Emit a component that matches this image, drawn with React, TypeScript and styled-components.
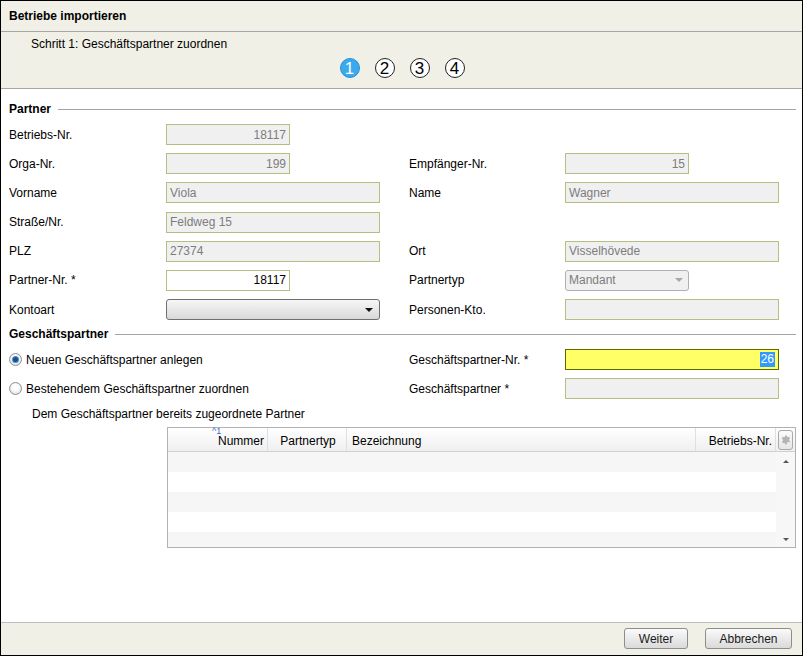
import styled, { createGlobalStyle } from 'styled-components';

const GlobalStyle = createGlobalStyle`
  html, body {
    margin: 0;
    padding: 0;
    background: #ffffff;
  }
  body {
    font-family: 'Liberation Sans', Arial, sans-serif;
    font-size: 12px;
    color: #000;
  }
  * {
    box-sizing: border-box;
  }
`;

type Align = 'left' | 'right' | 'center';

const partnerRows: Array<[string, Field | null, string, Field | null]> = [];

interface Field {
  value: string;
  align?: Align;
  wide?: boolean;
  editable?: boolean;
}

partnerRows.push(
  ['Betriebs-Nr.', { value: '18117', align: 'right' }, '', null],
  ['Orga-Nr.', { value: '199', align: 'right' }, 'Empfänger-Nr.', { value: '15', align: 'right' }],
  ['Vorname', { value: 'Viola', wide: true }, 'Name', { value: 'Wagner', wide: true }],
  ['Straße/Nr.', { value: 'Feldweg 15', wide: true }, '', null],
  ['PLZ', { value: '27374', wide: true }, 'Ort', { value: 'Visselhövede', wide: true }],
  ['Partner-Nr. *', { value: '18117', align: 'right', editable: true }, 'Partnertyp', null],
);

export default function App() {
  return (
    <>
      <GlobalStyle />
      <Window>
        <TitleBar>Betriebe importieren</TitleBar>

        <StepHeader>
          <StepText>Schritt 1: Geschäftspartner zuordnen</StepText>
          <Steps>
            {[1, 2, 3, 4].map((n) => (
              <Step key={n} $active={n === 1}>
                {n}
              </Step>
            ))}
          </Steps>
        </StepHeader>

        <Content>
          <SectionTitle>Partner</SectionTitle>
          <FormGrid>
            {partnerRows.map(([label, field, rLabel, rField], i) => (
              <FormRow key={i}>
                <Label>{label}</Label>
                <div>
                  {field && (
                    <Input $align={field.align} $wide={field.wide} $editable={field.editable}>
                      {field.value}
                    </Input>
                  )}
                </div>
                <Label>{rLabel}</Label>
                <div>
                  {rField && (
                    <Input $align={rField.align} $wide={rField.wide}>
                      {rField.value}
                    </Input>
                  )}
                  {rLabel === 'Partnertyp' && (
                    <LightSelect>
                      Mandant
                      <Caret $color="#a8a8a8" />
                    </LightSelect>
                  )}
                </div>
              </FormRow>
            ))}
            <FormRow>
              <Label>Kontoart</Label>
              <div>
                <ComboBox>
                  <Caret $color="#111" />
                </ComboBox>
              </div>
              <Label>Personen-Kto.</Label>
              <div>
                <Input $wide />
              </div>
            </FormRow>
          </FormGrid>

          <SectionTitle $gap>Geschäftspartner</SectionTitle>
          <FormGrid>
            <FormRow>
              <RadioLabel>
                <Radio $checked />
                Neuen Geschäftspartner anlegen
              </RadioLabel>
              <Label>Geschäftspartner-Nr. *</Label>
              <div>
                <Input $wide $align="right" $highlight>
                  <Selected>26</Selected>
                </Input>
              </div>
            </FormRow>
            <FormRow>
              <RadioLabel>
                <Radio />
                Bestehendem Geschäftspartner zuordnen
              </RadioLabel>
              <Label>Geschäftspartner *</Label>
              <div>
                <Input $wide />
              </div>
            </FormRow>
          </FormGrid>

          <SubCaption>Dem Geschäftspartner bereits zugeordnete Partner</SubCaption>

          <Table>
            <HeaderRow>
              <HeadCell $width={100} $align="right">
                <SortMark>^1</SortMark>
                Nummer
              </HeadCell>
              <HeadCell $width={79} $align="center">Partnertyp</HeadCell>
              <HeadCell $align="left">Bezeichnung</HeadCell>
              <HeadCell $width={80} $align="right">Betriebs-Nr.</HeadCell>
              <GearCell>
                <GearButton>
                  <svg width="10" height="10" viewBox="0 0 24 24" fill="#b4b4b4">
                    <path d="M10 1h4l.6 3.2a8 8 0 0 1 2.1 1.2l3.1-1.1 2 3.5-2.5 2.1a8 8 0 0 1 0 2.4l2.5 2.1-2 3.5-3.1-1.1a8 8 0 0 1-2.1 1.2L14 23h-4l-.6-3.2a8 8 0 0 1-2.1-1.2l-3.1 1.1-2-3.5 2.5-2.1a8 8 0 0 1 0-2.4L2.2 7.6l2-3.5 3.1 1.1a8 8 0 0 1 2.1-1.2z" />
                  </svg>
                </GearButton>
              </GearCell>
            </HeaderRow>
            <TableBody>
              <Rows>
                {[0, 1, 2, 3, 4].map((r) => (
                  <BodyRow key={r} $striped={r % 2 === 0} />
                ))}
              </Rows>
              <ScrollBar>
                <ScrollArrow $up />
                <ScrollArrow />
              </ScrollBar>
            </TableBody>
          </Table>
        </Content>

        <Footer>
          <Button $width={64}>Weiter</Button>
          <Button $width={87}>Abbrechen</Button>
        </Footer>
      </Window>
    </>
  );
}

const Window = styled.div`
  width: 803px;
  height: 656px;
  border: 1px solid #000;
  display: flex;
  flex-direction: column;
  background: #fff;
`;

const TitleBar = styled.div`
  height: 31px;
  display: flex;
  align-items: center;
  padding-left: 8px;
  padding-bottom: 1px;
  font-weight: bold;
  background: #f1f0e6;
  border-bottom: 1px solid #a6a6a6;
`;

const StepHeader = styled.div`
  height: 57px;
  display: flex;
  flex-direction: column;
  padding-top: 5px;
  background: #f1f0e6;
  border-bottom: 1px solid #a6a6a6;
`;

const StepText = styled.div`
  padding-left: 30px;
  line-height: 14px;
`;

const Steps = styled.div`
  display: flex;
  justify-content: center;
  gap: 15px;
  margin-top: 7px;
  padding-left: 1px;
`;

const Step = styled.div<{ $active?: boolean }>`
  width: 20px;
  height: 20px;
  border-radius: 50%;
  display: flex;
  align-items: center;
  justify-content: center;
  font-size: 17px;
  line-height: 1;
  border: 1px solid ${(p) => (p.$active ? '#2c8fd6' : '#222')};
  background: ${(p) => (p.$active ? '#3aa9ee' : '#fff')};
  color: ${(p) => (p.$active ? '#fff' : '#000')};
`;

const Content = styled.div`
  flex: 1;
  padding: 0 6px 0 8px;
  display: flex;
  flex-direction: column;
`;

const SectionTitle = styled.div<{ $gap?: boolean }>`
  display: flex;
  align-items: center;
  gap: 7px;
  margin-top: ${(p) => (p.$gap ? '7px' : '13px')};
  margin-bottom: 8px;
  font-weight: bold;
  line-height: 14px;

  &::after {
    content: '';
    flex: 1;
    height: 1px;
    background: #a4a4a4;
  }
`;

const FormGrid = styled.div`
  display: flex;
  flex-direction: column;
  gap: 8.2px;
`;

const FormRow = styled.div`
  display: grid;
  grid-template-columns: 157px 243px 156px 1fr;
  height: 21px;
  align-items: center;
`;

const Label = styled.div`
  line-height: 14px;
`;

const Input = styled.div<{ $align?: Align; $wide?: boolean; $editable?: boolean; $highlight?: boolean }>`
  width: ${(p) => (p.$wide ? '214px' : '124px')};
  height: 21px;
  padding: 0 3px;
  display: flex;
  align-items: center;
  justify-content: ${(p) => (p.$align === 'right' ? 'flex-end' : 'flex-start')};
  border: 1px solid ${(p) => (p.$highlight ? '#5c6a00' : '#b7be82')};
  background: ${(p) => (p.$highlight ? '#ffff66' : p.$editable ? '#fff' : '#f0f0f0')};
  color: ${(p) => (p.$editable || p.$highlight ? '#000' : '#7d7d7d')};
  font-size: 12px;
`;

const Selected = styled.span`
  background: #3399ff;
  color: #fff;
  line-height: 15px;
  padding: 0 1px;
`;

const LightSelect = styled.div`
  width: 124px;
  height: 21px;
  padding: 0 3px;
  display: flex;
  align-items: center;
  justify-content: space-between;
  border: 1px solid #b0b0b0;
  border-radius: 3px;
  background: #f0f0f0;
  color: #7d7d7d;
`;

const ComboBox = styled.div`
  width: 214px;
  height: 21px;
  padding: 0 4px;
  display: flex;
  align-items: center;
  justify-content: flex-end;
  border: 1px solid #6f6f6f;
  border-radius: 3px;
  background: linear-gradient(#f6f6f6, #d9d9d9);
`;

const Caret = styled.span<{ $color: string }>`
  width: 0;
  height: 0;
  margin-right: 2px;
  border-left: 4px solid transparent;
  border-right: 4px solid transparent;
  border-top: 4px solid ${(p) => p.$color};
`;

const RadioLabel = styled.label`
  grid-column: span 2;
  display: flex;
  align-items: center;
  gap: 4px;
  line-height: 14px;
`;

const Radio = styled.span<{ $checked?: boolean }>`
  width: 13px;
  height: 13px;
  border-radius: 50%;
  border: 1px solid #8e8f8f;
  background: radial-gradient(circle at 50% 40%, #fff 30%, #d4d4d4 100%);
  display: flex;
  align-items: center;
  justify-content: center;

  &::after {
    content: '';
    display: ${(p) => (p.$checked ? 'block' : 'none')};
    width: 5px;
    height: 5px;
    border-radius: 50%;
    background: #1d4f8a;
    box-shadow: 0 0 0 1px #4c8ed6;
  }
`;

const SubCaption = styled.div`
  padding-left: 23px;
  margin-top: 8px;
  line-height: 14px;
`;

const Table = styled.div`
  margin: 6px 0 0 158px;
  height: 121px;
  border: 1px solid #b2b2b2;
  display: flex;
  flex-direction: column;
`;

const HeaderRow = styled.div`
  height: 24px;
  display: flex;
  background: linear-gradient(#ffffff, #efefef);
  border-bottom: 1px solid #d0d0d0;
`;

const HeadCell = styled.div<{ $width?: number; $align: Align }>`
  position: relative;
  ${(p) => (p.$width ? `width: ${p.$width}px;` : 'flex: 1;')}
  display: flex;
  align-items: flex-end;
  padding: 0 3px 3px 5px;
  justify-content: ${(p) =>
    p.$align === 'right' ? 'flex-end' : p.$align === 'center' ? 'center' : 'flex-start'};
  border-right: 1px solid #e0e0e0;
  line-height: 14px;
`;

const SortMark = styled.span`
  position: absolute;
  top: 0;
  left: 44px;
  font-size: 9px;
  line-height: 7px;
  color: #2f6fc4;
`;

const GearCell = styled.div`
  width: 19px;
  display: flex;
  align-items: center;
  justify-content: center;
`;

const GearButton = styled.div`
  width: 15px;
  height: 20px;
  border: 1px solid #a9a9a9;
  border-radius: 3px;
  background: linear-gradient(#fbfbfb, #e6e6e6);
  display: flex;
  align-items: center;
  justify-content: center;
`;

const TableBody = styled.div`
  flex: 1;
  display: flex;
  overflow: hidden;
`;

const Rows = styled.div`
  flex: 1;
  display: flex;
  flex-direction: column;
`;

const BodyRow = styled.div<{ $striped?: boolean }>`
  height: 20px;
  flex-shrink: 0;
  background: ${(p) => (p.$striped ? '#f6f6f6' : '#fff')};
`;

const ScrollBar = styled.div`
  width: 19px;
  background: #f7f7f7;
  display: flex;
  flex-direction: column;
  justify-content: space-between;
  align-items: center;
  padding: 8px 0 6px;
`;

const ScrollArrow = styled.span<{ $up?: boolean }>`
  width: 0;
  height: 0;
  border-left: 3px solid transparent;
  border-right: 3px solid transparent;
  ${(p) => (p.$up ? 'border-bottom: 3px solid #555;' : 'border-top: 3px solid #555;')}
`;

const Footer = styled.div`
  height: 33px;
  display: flex;
  align-items: center;
  justify-content: flex-end;
  gap: 17px;
  padding: 0 10px 1px 0;
  background: #f1f0e6;
  border-top: 1px solid #bdbdbd;
`;

const Button = styled.button<{ $width: number }>`
  width: ${(p) => p.$width}px;
  height: 21px;
  padding: 0;
  font-family: 'Liberation Sans', Arial, sans-serif;
  font-size: 12px;
  color: #1b1b1b;
  border: 1px solid #8d8d8d;
  border-radius: 3px;
  background: linear-gradient(#fafafa, #dadada);
  cursor: pointer;
`;
